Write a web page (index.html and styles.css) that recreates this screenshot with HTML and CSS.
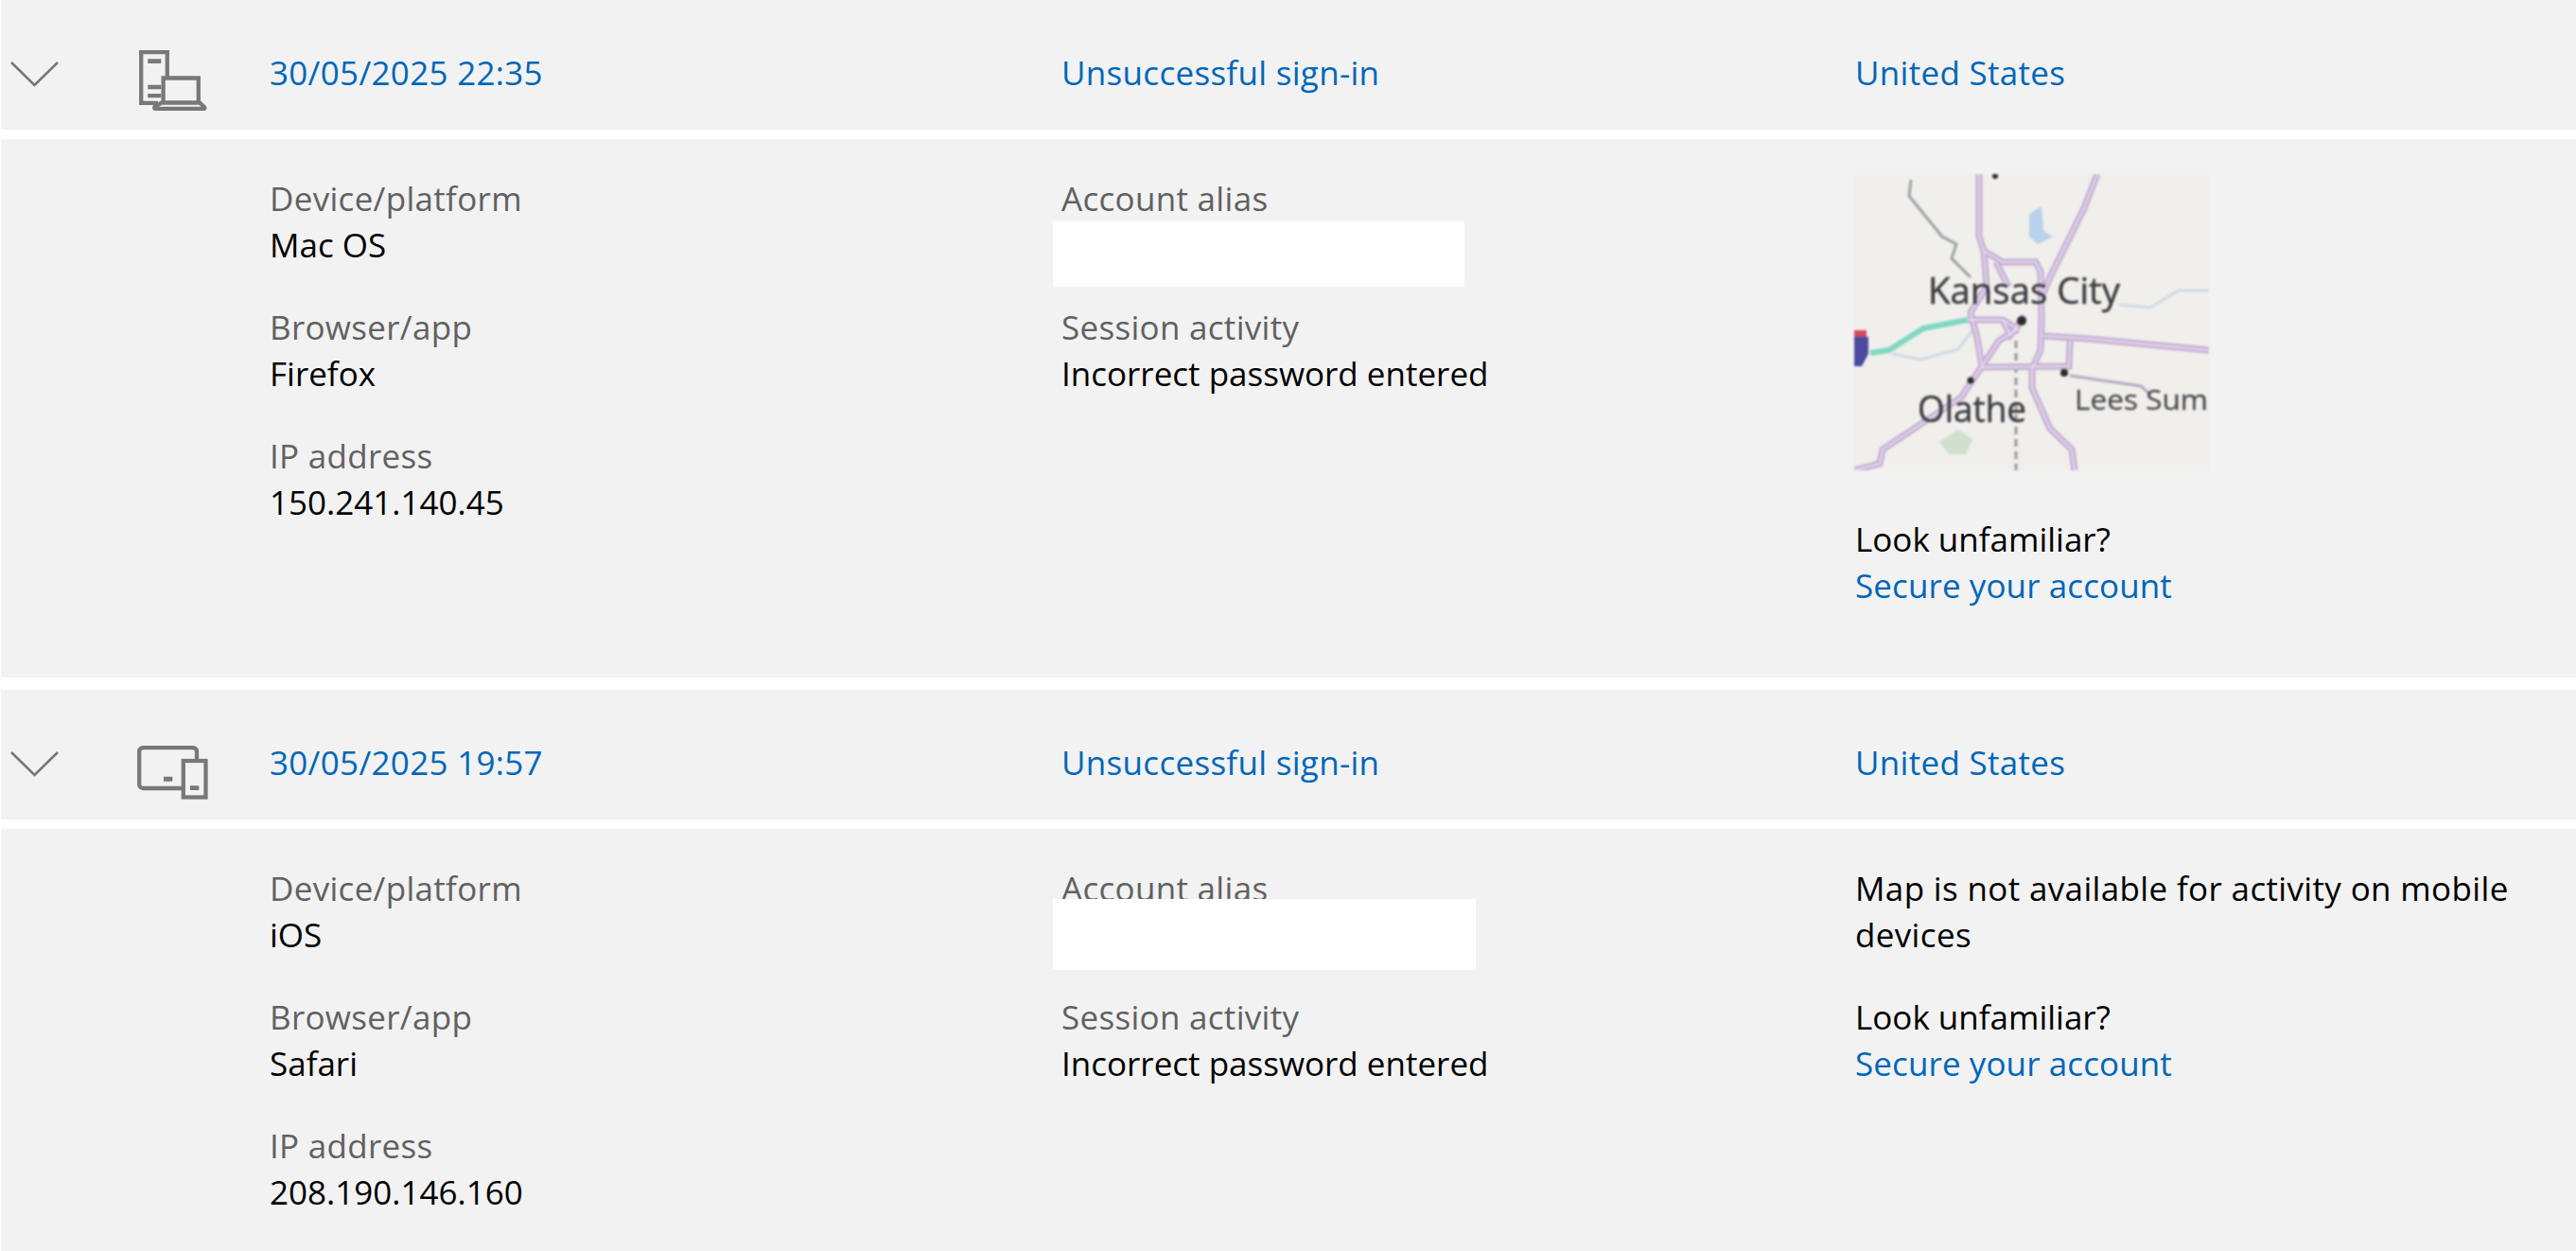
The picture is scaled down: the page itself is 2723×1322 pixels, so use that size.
FILE: index.html
```html
<!DOCTYPE html>
<html lang="en">
<head>
  <meta charset="UTF-8">
  <title>Recent activity</title>
  <link rel="stylesheet" href="styles.css">
</head>
<body>
  <!-- first sign-in -->
  <div class="row-head">
    <div class="row-icons">
      <svg class="chevron" viewBox="0 0 51 27"><path d="M1 1 L25.5 25 L50 1"/></svg>
      <svg class="device device-pc" viewBox="0 0 72 64">
        <path d="M29.8 28 V2.2 H2.2 V55.8 H20"/>
        <path d="M25.6 55 V29.5 H62.8 V55"/>
        <path d="M24 55.5 H64 L69 60 Q70 62 68 62 H18 Q15.5 62 16.5 60 Z"/>
        <path class="solid" d="M9.3 9.3 H23.3 V14 H9.3 Z M9.3 36.7 H23.3 V41.3 H9.3 Z M9.3 46 H23.3 V50.3 H9.3 Z"/>
      </svg>
    </div>
    <a class="link">30/05/2025 22:35</a>
    <a class="link">Unsuccessful sign-in</a>
    <a class="link">United States</a>
  </div>
  <div class="row-detail">
    <div></div>
    <div>
      <div class="field"><div class="label">Device/platform</div><div class="value">Mac OS</div></div>
      <div class="field"><div class="label">Browser/app</div><div class="value">Firefox</div></div>
      <div class="field"><div class="label">IP address</div><div class="value">150.241.140.45</div></div>
    </div>
    <div>
      <div class="field"><div class="label">Account alias</div><div class="value alias"><span class="mask mask-one"></span></div></div>
      <div class="field"><div class="label">Session activity</div><div class="value">Incorrect password entered</div></div>
    </div>
    <div>
      <svg class="map" viewBox="0 0 375 313">
        <defs>
          <g id="roads">
            <path d="M132 0 V66 L137 81 L157 93 H192 L197 103 L198 153 L197 186 L188 206 V226 L207 269 L230 291 L233 313"/>
            <path d="M257 0 L243 36 L207 109 L200 126"/>
            <path d="M137 81 L140 119 L123 146 L130 173 L135 203 L113 236 L30 291 L27 306 L0 313"/>
            <path d="M120 154 H157 L175 165"/>
            <path d="M135 204 L227 203 L228 176"/>
            <path d="M200 171 L247 174 L375 186"/>
            <path d="M135 203 L153 176 L173 164"/>
            <path d="M150 93 L163 119"/>
            <path d="M157 154 L165 170 L180 150"/>
          </g>
        </defs>
        <rect width="375" height="313" fill="#f0efeb"/>
        <path class="river-grey" d="M60 6 L58 23 L93 66 L108 74 L103 89 L123 109"/>
        <path class="river-blue" d="M280 138 L313 141 L343 123 L375 123"/>
        <path class="river-blue" d="M40 190 L70 196 L110 185 L125 165"/>
        <path class="lake" d="M185 42 L198 34 L200 60 L210 66 L194 74 L185 66 Z"/>
        <path class="park" d="M90 283 L110 270 L125 280 L118 296 L100 296 Z"/>
        <path class="rail" d="M171 176 V313"/>
        <use class="road-out" href="#roads"/>
        <use class="road-in" href="#roads"/>
        <path class="road-thin" d="M228 213 L303 224 L313 233"/>
        <path class="turnpike" d="M17 189 L37 186 L73 163 L120 154"/>
        <path fill="#4c4a9e" d="M0 172 H15 V190 L8 203 H0 Z"/>
        <path fill="#d8485c" d="M0 165 H13 V172 H0 Z"/>
        <circle class="city" cx="177" cy="155" r="5"/>
        <circle class="city" cx="123" cy="218" r="3.5"/>
        <circle class="city" cx="222" cy="210" r="4"/>
        <circle class="city" cx="149" cy="2" r="3"/>
        <text class="map-big" x="78" y="137" textLength="203" lengthAdjust="spacingAndGlyphs">Kansas City</text>
        <text class="map-big" x="67" y="262" textLength="115" lengthAdjust="spacingAndGlyphs">Olathe</text>
        <text class="map-small" x="233" y="249" textLength="141" lengthAdjust="spacingAndGlyphs">Lees Sum</text>
      </svg>
      <div class="value">Look unfamiliar?</div>
      <a class="link block">Secure your account</a>
    </div>
  </div>

  <!-- second sign-in -->
  <div class="row-head second">
    <div class="row-icons">
      <svg class="chevron" viewBox="0 0 51 27"><path d="M1 1 L25.5 25 L50 1"/></svg>
      <svg class="device device-mobile" viewBox="0 0 75 57">
        <path d="M63 14 V6.2 a4 4 0 0 0 -4 -4 H6.2 a4 4 0 0 0 -4 4 V41 a4 4 0 0 0 4 4 H47"/>
        <rect x="48.8" y="16" width="23.7" height="38.5"/>
        <path class="solid" d="M28 32.7 H37.3 V37.7 H28 Z M56 42.3 H65.3 V47 H56 Z"/>
      </svg>
    </div>
    <a class="link">30/05/2025 19:57</a>
    <a class="link">Unsuccessful sign-in</a>
    <a class="link">United States</a>
  </div>
  <div class="row-detail">
    <div></div>
    <div>
      <div class="field"><div class="label">Device/platform</div><div class="value">iOS</div></div>
      <div class="field"><div class="label">Browser/app</div><div class="value">Safari</div></div>
      <div class="field"><div class="label">IP address</div><div class="value">208.190.146.160</div></div>
    </div>
    <div>
      <div class="field"><div class="label">Account alias</div><div class="value alias"><span class="mask mask-two"></span></div></div>
      <div class="field"><div class="label">Session activity</div><div class="value">Incorrect password entered</div></div>
    </div>
    <div>
      <div class="field value map-note">Map is not available for activity on mobile devices</div>
      <div class="value">Look unfamiliar?</div>
      <a class="link block">Secure your account</a>
    </div>
  </div>
</body>
</html>
```

FILE: styles.css
```css
html, body { height: 100%; }
body {
  margin: 0;
  padding-left: 1px;
  height: 1322px;
  box-sizing: border-box;
  overflow: hidden;
  background: #fff;
  font-family: 'Open Sans', 'Noto Sans', sans-serif;
  font-size: 35px;
  line-height: 49px;
}
.row-head, .row-detail {
  display: grid;
  grid-template-columns: 284px 837px 839px 1fr;
  background: #f2f2f2;
}
.row-head {
  height: 137px;
  padding-top: 52px;
  box-sizing: border-box;
}
.row-head.second { margin-top: 13px; }
.row-detail {
  margin-top: 10px;
  min-height: 569px;
  padding-top: 38px;
  box-sizing: border-box;
}
.row-icons { display: flex; align-items: flex-start; padding-left: 10px; }
.chevron { width: 51px; height: 27px; margin-top: 13px; flex: none; }
.chevron path { fill: none; stroke: #767676; stroke-width: 2.6; }
.device { flex: none; }
.device path, .device rect { fill: none; stroke: #787878; stroke-width: 4.3; }
.device .solid { fill: #787878; stroke: none; }
.device-pc { width: 72px; height: 64px; margin: 1px 0 0 85px; }
.device-mobile { width: 75px; height: 57px; margin: 7px 0 0 83px; }
.link { color: #0067b8; letter-spacing: 0.3px; }
.block { display: block; letter-spacing: 0.1px; }
.label { color: #616161; letter-spacing: 0.3px; }
.value { color: #000; }
.map-note { letter-spacing: 0.35px; }
.field { margin-bottom: 38px; }
.alias { position: relative; height: 49px; }
.mask { position: absolute; left: -9px; background: #fff; }
.mask-one { top: 0; width: 435px; height: 69px; }
.mask-two { top: -13px; width: 447px; height: 75px; }
.map {
  display: block;
  width: 375px;
  height: 313px;
  margin: -1px 0 48px -1px;
  filter: blur(0.8px);
}
.road-out { fill: none; stroke: #c4aed4; stroke-width: 7; }
.road-in { fill: none; stroke: #e6d9ec; stroke-width: 2; }
.road-thin { fill: none; stroke: #b9a9c4; stroke-width: 3; }
.river-grey { fill: none; stroke: #9aa5a8; stroke-width: 3; }
.river-blue { fill: none; stroke: #cfdbe6; stroke-width: 3; }
.lake { fill: #b7d2ea; }
.park { fill: #cfe0cf; }
.rail { fill: none; stroke: #999; stroke-width: 3; stroke-dasharray: 8 5; }
.turnpike { fill: none; stroke: #7fd8c0; stroke-width: 6; }
.city { fill: #2c2c30; }
.map-big { font-size: 39px; fill: #3e3e44; stroke: #3e3e44; stroke-width: 0.5; }
.map-small { font-size: 29px; fill: #4c4c52; stroke: #4c4c52; stroke-width: 0.3; }
```
